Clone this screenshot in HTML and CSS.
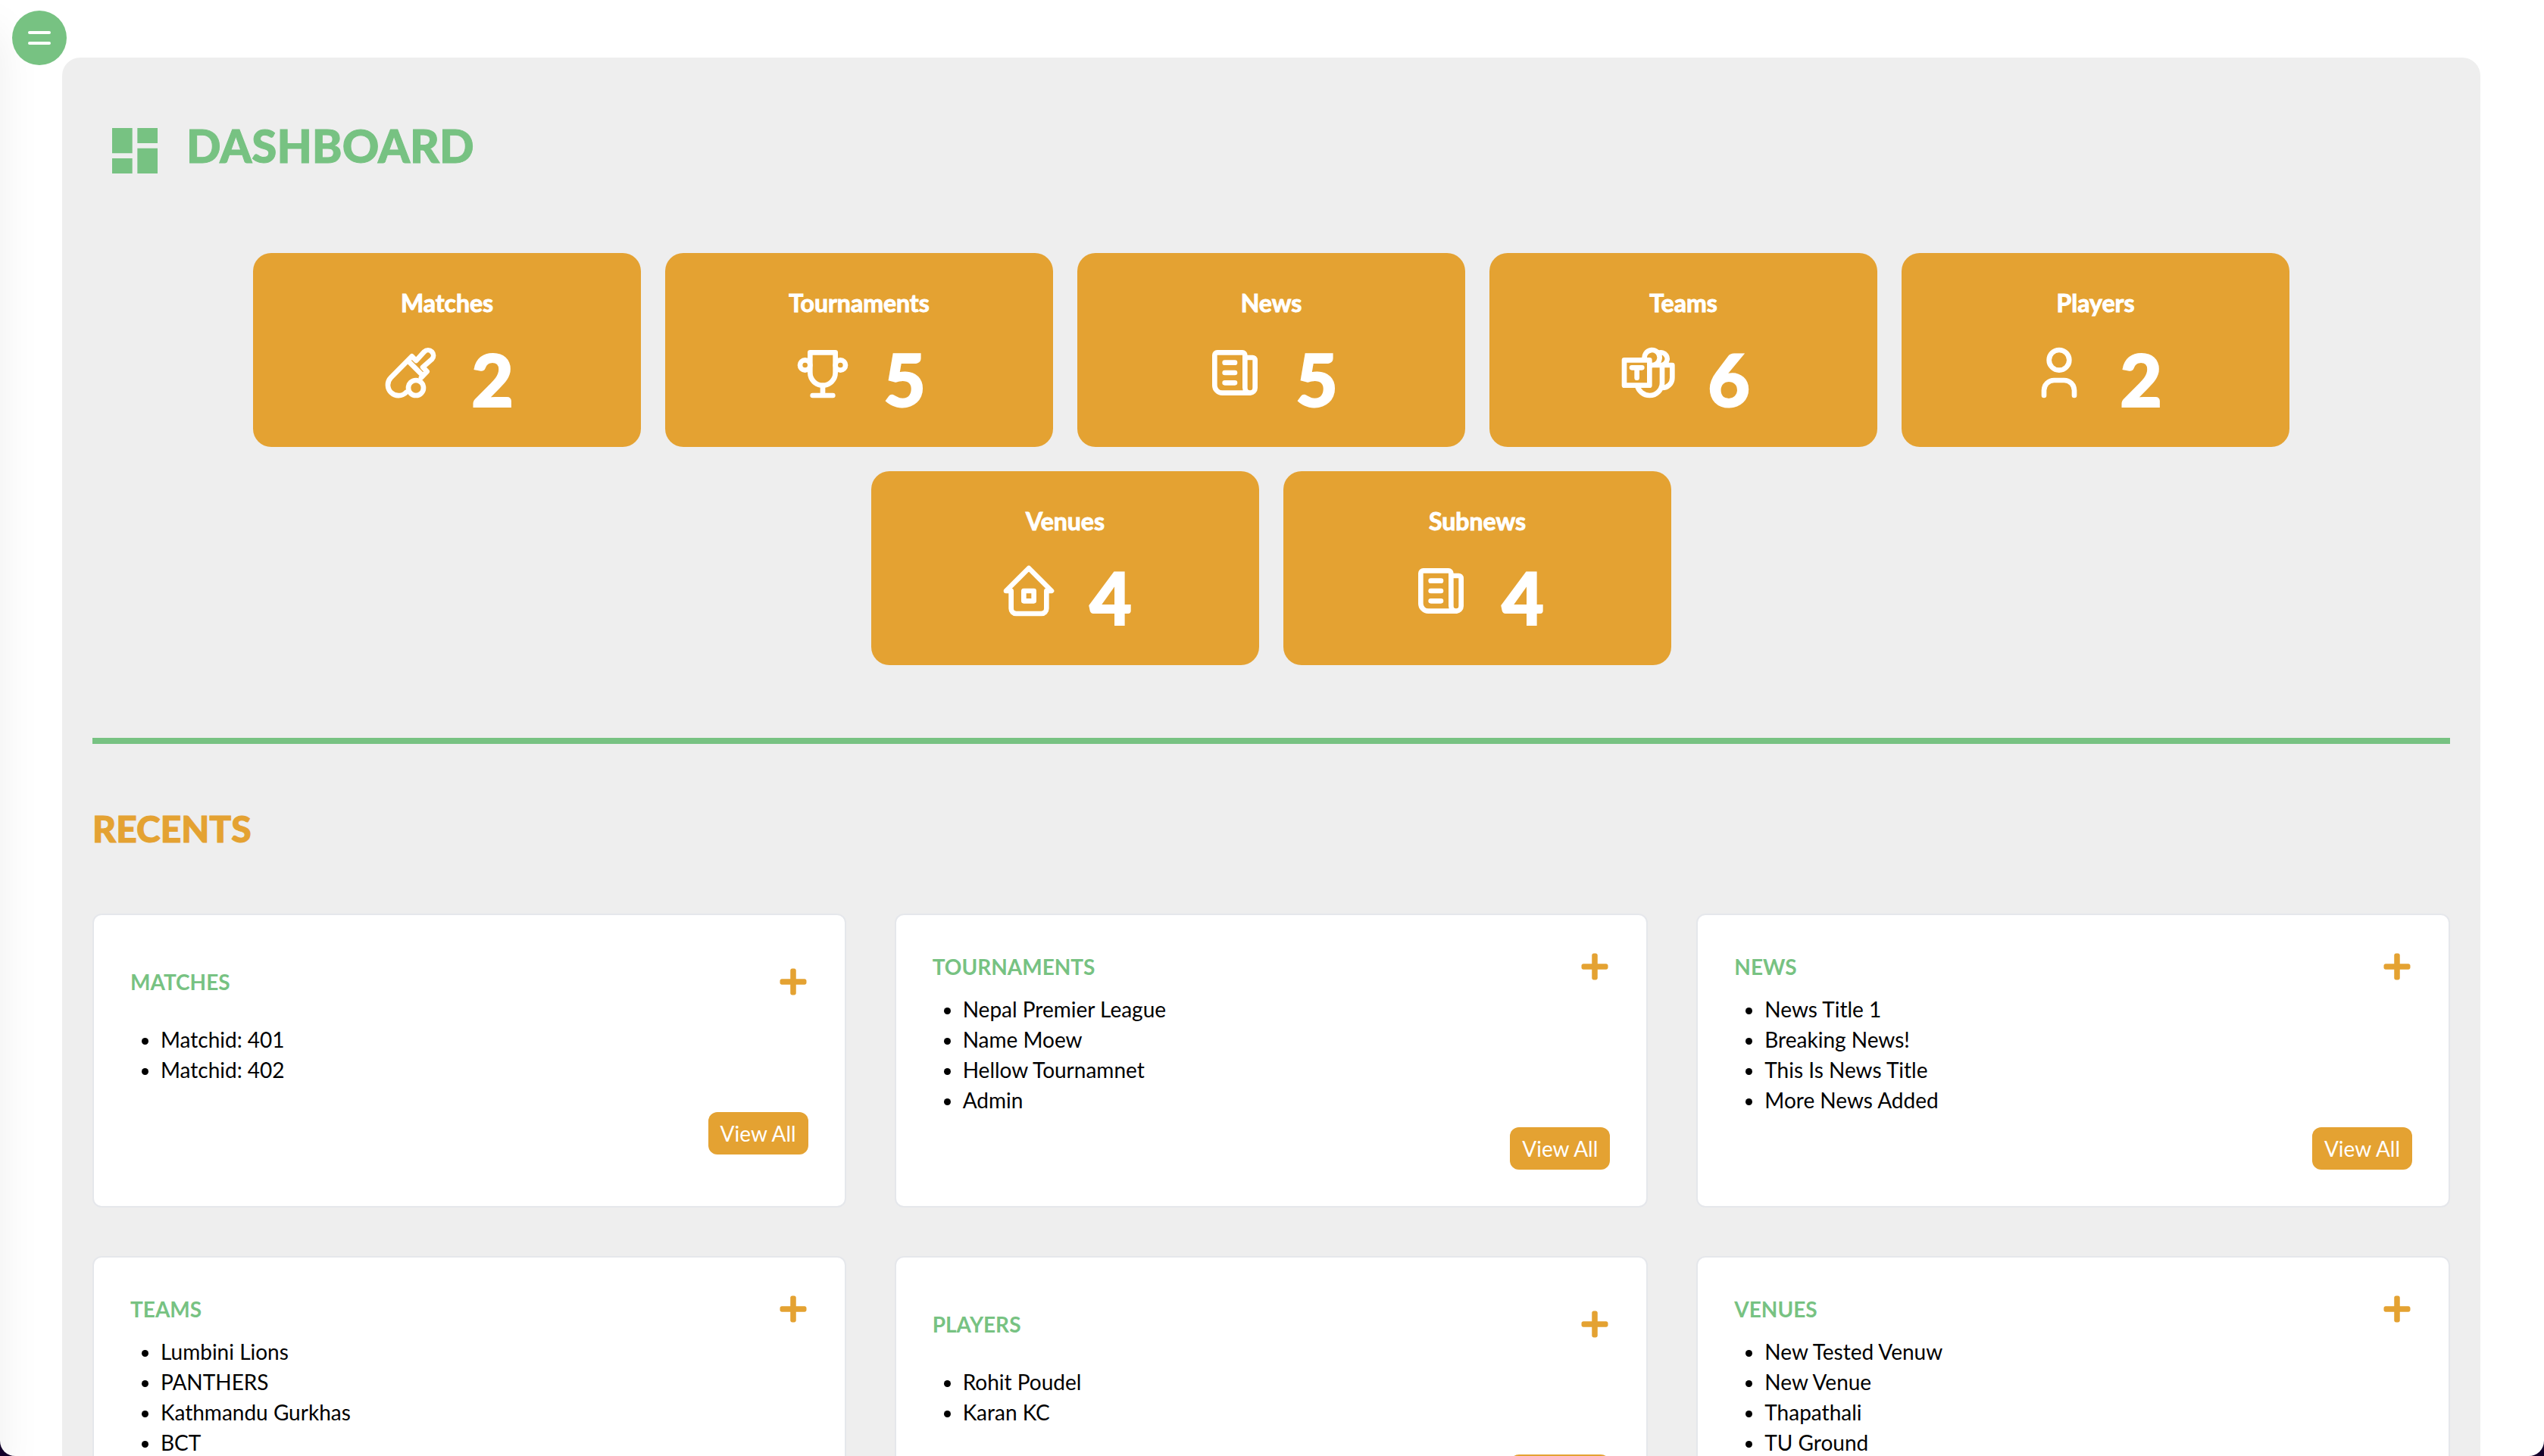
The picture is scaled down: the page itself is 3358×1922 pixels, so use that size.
FILE: index.html
```html
<!DOCTYPE html>
<html lang="en">
<head>
<meta charset="utf-8">
<meta name="viewport" content="width=device-width, initial-scale=1">
<title>Dashboard</title>
<link rel="stylesheet" href="styles.css">
</head>
<body>
<svg class="sprite" aria-hidden="true">
  <symbol id="i-cricket" viewBox="0 0 24 24"><path d="M10.2 19.8A4.2 4.2 0 0 1 4.2 13.9L12.5 5.5l1.7 1.7 3.2-3.5a2.1 2.1 0 0 1 3 3l-3.6 3.1 1.7 1.7-2.3 2.4M11 7.3l5.7 5.7"/><circle cx="14.1" cy="18" r="3"/></symbol>
  <symbol id="i-trophy" viewBox="0 0 24 24"><path d="M8 21h8M12 17v4M7 4h10v8a5 5 0 0 1-10 0z"/><circle cx="5" cy="9" r="2"/><circle cx="19" cy="9" r="2"/></symbol>
  <symbol id="i-news" viewBox="0 0 24 24"><path d="M16 6h3a1 1 0 0 1 1 1v11a2 2 0 0 1-4 0V5a1 1 0 0 0-1-1H5a1 1 0 0 0-1 1v12a3 3 0 0 0 3 3h11M8 8h4M8 12h4M8 16h4"/></symbol>
  <symbol id="i-teams" viewBox="0 0 24 24"><path d="M3 7h10v10H3zM6 10h4M8 10v4M8.104 17c.47 2.274 2.483 4 4.896 4a5 5 0 0 0 5-5V9h-5M18 18a4 4 0 0 0 4-4V9h-4M13.003 8.83a3 3 0 1 0-1.833-1.83M15.83 8.36a2.5 2.5 0 1 0 .594-4.117"/></symbol>
  <symbol id="i-user" viewBox="0 0 24 24"><circle cx="12" cy="7" r="4"/><path d="M6 21v-2a4 4 0 0 1 4-4h4a4 4 0 0 1 4 4v2"/></symbol>
  <symbol id="i-home" viewBox="0 0 24 24"><path d="M5 12H3l9-9 9 9h-2M5 12v7a2 2 0 0 0 2 2h10a2 2 0 0 0 2-2v-7M10 12h4v4h-4z"/></symbol>
  <symbol id="i-plus" viewBox="-32 0 512 512"><path d="M416 208H272V64c0-17.67-14.33-32-32-32h-32c-17.67 0-32 14.33-32 32v144H32c-17.67 0-32 14.33-32 32v32c0 17.67 14.33 32 32 32h144v144c0 17.67 14.33 32 32 32h32c17.67 0 32-14.33 32-32V304h144c17.67 0 32-14.33 32-32v-32c0-17.67-14.33-32-32-32z"/></symbol>
</svg>

<div class="app">
  <aside class="sidebar" aria-hidden="true"></aside>
  <button class="menu-toggle" type="button" aria-label="Open menu"><span class="bar"></span><span class="bar"></span></button>

  <main class="panel">
    <header class="page-head">
      <svg class="page-icon" viewBox="0 0 24 24" aria-hidden="true"><path d="M3 13h8V3H3v10zm0 8h8v-6H3v6zm10 0h8V11h-8v10zm0-18v6h8V3h-8z"/></svg>
      <h1 class="page-title">DASHBOARD</h1>
    </header>

    <section class="stats" aria-label="Totals">
      <article class="stat"><h2 class="stat-name">Matches</h2><div class="stat-row"><svg class="stat-icon"><use href="#i-cricket"/></svg><span class="stat-value">2</span></div></article>
      <article class="stat"><h2 class="stat-name">Tournaments</h2><div class="stat-row"><svg class="stat-icon"><use href="#i-trophy"/></svg><span class="stat-value">5</span></div></article>
      <article class="stat"><h2 class="stat-name">News</h2><div class="stat-row"><svg class="stat-icon"><use href="#i-news"/></svg><span class="stat-value">5</span></div></article>
      <article class="stat"><h2 class="stat-name">Teams</h2><div class="stat-row"><svg class="stat-icon"><use href="#i-teams"/></svg><span class="stat-value">6</span></div></article>
      <article class="stat"><h2 class="stat-name">Players</h2><div class="stat-row"><svg class="stat-icon"><use href="#i-user"/></svg><span class="stat-value">2</span></div></article>
      <article class="stat"><h2 class="stat-name">Venues</h2><div class="stat-row"><svg class="stat-icon"><use href="#i-home"/></svg><span class="stat-value">4</span></div></article>
      <article class="stat"><h2 class="stat-name">Subnews</h2><div class="stat-row"><svg class="stat-icon"><use href="#i-news"/></svg><span class="stat-value">4</span></div></article>
    </section>

    <hr class="divider">

    <h2 class="section-title">RECENTS</h2>

    <section class="recents" aria-label="Recents">
      <article class="card">
        <div class="card-head"><h3 class="card-title">MATCHES</h3><button class="add" type="button" aria-label="Add match"><svg class="add-icon"><use href="#i-plus"/></svg></button></div>
        <div class="card-body"><ul class="list"><li>Matchid: 401</li><li>Matchid: 402</li></ul></div>
        <button class="view-all" type="button">View All</button>
      </article>
      <article class="card">
        <div class="card-head"><h3 class="card-title">TOURNAMENTS</h3><button class="add" type="button" aria-label="Add tournament"><svg class="add-icon"><use href="#i-plus"/></svg></button></div>
        <div class="card-body"><ul class="list"><li>Nepal Premier League</li><li>Name Moew</li><li>Hellow Tournamnet</li><li>Admin</li></ul></div>
        <button class="view-all" type="button">View All</button>
      </article>
      <article class="card">
        <div class="card-head"><h3 class="card-title">NEWS</h3><button class="add" type="button" aria-label="Add news"><svg class="add-icon"><use href="#i-plus"/></svg></button></div>
        <div class="card-body"><ul class="list"><li>News Title 1</li><li>Breaking News!</li><li>This Is News Title</li><li>More News Added</li></ul></div>
        <button class="view-all" type="button">View All</button>
      </article>
      <article class="card">
        <div class="card-head"><h3 class="card-title">TEAMS</h3><button class="add" type="button" aria-label="Add team"><svg class="add-icon"><use href="#i-plus"/></svg></button></div>
        <div class="card-body"><ul class="list"><li>Lumbini Lions</li><li>PANTHERS</li><li>Kathmandu Gurkhas</li><li>BCT</li></ul></div>
        <button class="view-all" type="button">View All</button>
      </article>
      <article class="card">
        <div class="card-head"><h3 class="card-title">PLAYERS</h3><button class="add" type="button" aria-label="Add player"><svg class="add-icon"><use href="#i-plus"/></svg></button></div>
        <div class="card-body"><ul class="list"><li>Rohit Poudel</li><li>Karan KC</li></ul></div>
        <button class="view-all" type="button">View All</button>
      </article>
      <article class="card">
        <div class="card-head"><h3 class="card-title">VENUES</h3><button class="add" type="button" aria-label="Add venue"><svg class="add-icon"><use href="#i-plus"/></svg></button></div>
        <div class="card-body"><ul class="list"><li>New Tested Venuw</li><li>New Venue</li><li>Thapathali</li><li>TU Ground</li></ul></div>
        <button class="view-all" type="button">View All</button>
      </article>
    </section>
  </main>
</div>
</body>
</html>
```
FILE: styles.css
```css
:root {
  --green: #77c282;
  --orange: #e4a232;
  --panel: #eeeeee;
  --border: #e5e7eb;
}

* { box-sizing: border-box; margin: 0; padding: 0; }

body {
  background: #12002a;
  color: #000;
  font-family: Lato, "Liberation Sans", sans-serif;
  font-size: 28px;
  line-height: 40px;
}

button { border: 0; background: none; font: inherit; cursor: pointer; }

.sprite { display: none; }

.app {
  position: relative;
  height: 100vh;
  overflow: hidden;
  padding: 76px 84px 0 82px;
  background: #fff;
  border-radius: 0 0 20px 20px;
}

/* Off-canvas navigation: only its shadow reaches the page while closed. */
.sidebar {
  position: absolute;
  inset: 0 100% 0 auto;
  width: 480px;
  box-shadow: 0 40px 54px rgba(0, 0, 0, 0.07);
}

.menu-toggle {
  position: absolute;
  top: 14px;
  left: 16px;
  display: flex;
  flex-direction: column;
  align-items: center;
  justify-content: center;
  gap: 10px;
  width: 72px;
  height: 72px;
  border-radius: 50%;
  background: var(--green);
}

.bar { width: 30px; height: 4px; border-radius: 2px; background: #fff; }

.panel {
  padding: 76px 40px 40px;
  border-radius: 24px;
  background: var(--panel);
}

.page-head {
  display: flex;
  align-items: flex-start;
  gap: 28px;
  padding: 0 16px;
  margin-bottom: 95px;
}

.page-icon { width: 80px; height: 80px; margin-top: 7px; fill: var(--green); }

.page-title {
  color: var(--green);
  font-size: 60px;
  line-height: 80px;
  font-weight: 900;
  -webkit-text-stroke: 1px currentColor;
}

.stats { display: flex; flex-wrap: wrap; justify-content: center; gap: 32px; }

.stat {
  display: flex;
  flex-direction: column;
  align-items: center;
  justify-content: center;
  gap: 28px;
  width: 512px;
  height: 256px;
  border-radius: 24px;
  background: var(--orange);
  color: #fff;
}

.stat-name {
  font-size: 32px;
  line-height: 48px;
  font-weight: 700;
  -webkit-text-stroke: 1px currentColor;
}

.stat-row { display: flex; align-items: flex-start; gap: 40px; }

.stat-icon {
  width: 80px;
  height: 80px;
  fill: none;
  stroke: currentColor;
  stroke-width: 2;
  stroke-linecap: round;
  stroke-linejoin: round;
}

.stat-value {
  font-size: 96px;
  line-height: 96px;
  font-weight: 900;
  -webkit-text-stroke: 2px currentColor;
}

.divider { height: 8px; margin: 96px 0 80px; border: 0; background: var(--green); }

.section-title {
  margin-bottom: 80px;
  color: var(--orange);
  font-size: 48px;
  line-height: 64px;
  font-weight: 900;
  -webkit-text-stroke: 1px currentColor;
}

.recents { display: grid; grid-template-columns: repeat(3, 1fr); gap: 64px; }

.card {
  display: flex;
  flex-direction: column;
  justify-content: center;
  gap: 16px;
  padding: 48px;
  border: 2px solid var(--border);
  border-radius: 12px;
  background: #fff;
}

.card-head { display: flex; align-items: center; justify-content: space-between; }

.card-title { color: var(--green); font-size: 28px; font-weight: 700; }

.add { width: 40px; height: 40px; color: var(--orange); }

.add-icon { display: block; width: 40px; height: 40px; fill: currentColor; }

.card-body { display: flex; flex-direction: column; justify-content: center; min-height: 120px; }

.list { padding-left: 40px; list-style: disc; }

.view-all {
  align-self: flex-end;
  padding: 8px 16px;
  border-radius: 12px;
  background: var(--orange);
  color: #fff;
}
```
